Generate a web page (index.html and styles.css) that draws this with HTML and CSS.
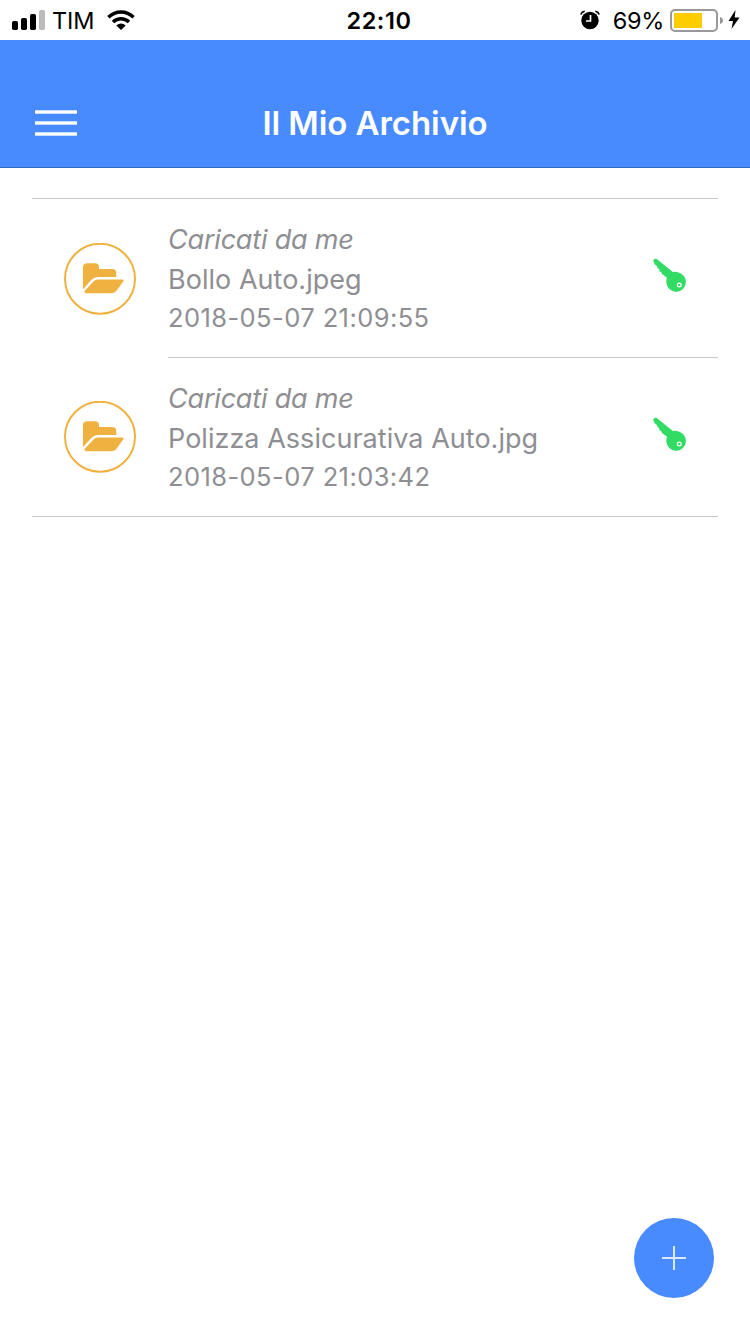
FILE: index.html
```html
<!DOCTYPE html>
<html lang="it">
<head>
<meta charset="utf-8">
<title>Il Mio Archivio</title>
<link rel="stylesheet" href="styles.css">
</head>
<body>
<svg class="defs" width="0" height="0">
  <symbol id="folder" viewBox="0 0 72 72">
    <circle cx="36" cy="35.700" r="35" fill="none" stroke="#efb240" stroke-width="2"/>
    <path fill="#efb240" d="M19 46.3V24.5Q19 20.3 23.2 20.3H31Q35 20.3 35 24.3V26H48Q52.3 26 52.3 30.2V34H35Q30.300 34 27.300 37Z"/>
    <path fill="#efb240" d="M21 47.600L29.500 38.500Q31.300 36.600 34 36.600H58.500Q60.500 36.800 59 38.800L53 47Q51 50.200 47 50.200H22Q19.500 50 21 47.600Z"/>
  </symbol>
  <symbol id="key" viewBox="0 0 36 36">
    <path fill="#32db64" d="M1.200 4Q1.700 1.300 4.800 2L20.800 15Q25 14.200 28.500 16.300A9.700 9.700 0 1 1 14.500 26Q14 23.500 15 20.500L13.200 19.500L11.500 18L10.300 17.500L9.500 15.500L7.500 14.200L7.200 12.300L5.500 11L5 9L2.800 7.500Z"/>
    <circle cx="27.300" cy="28" r="1.900" fill="#32db64" stroke="#fff" stroke-width="1.200"/>
  </symbol>
</svg>
<div class="status">
  <div class="status-left">
    <svg width="34" height="20" viewBox="0 0 34 20"><rect y="11" width="6" height="9" rx="1.700"/><rect x="9" y="8" width="6" height="12" rx="1.700"/><rect x="18" y="4" width="6" height="16" rx="1.700"/><rect x="27" width="6" height="20" rx="1.700" fill="#bbb"/></svg>
    <span class="carrier">TIM</span>
    <svg class="wifi" width="28" height="20" viewBox="0 0 28 20"><g fill="none" stroke="#000" stroke-width="3.500"><path d="M1.400 7.300Q7 2 14 2T26.600 7.300"/><path d="M6 12Q9.500 8.700 14 8.700T22 12"/></g><path d="M9.300 15.400Q14 11.600 18.700 15.400L14 20Z"/></svg>
  </div>
  <span class="clock">22:10</span>
  <div class="status-right">
    <svg width="20" height="20" viewBox="0 0 20 20"><circle cx="10" cy="10.500" r="8.700"/><path d="M.9 4.700Q1.500 1.600 4.700 1.200M19.100 4.700Q18.500 1.600 15.300 1.200" fill="none" stroke="#000" stroke-width="1.500"/><path d="M10.500 5V11H6" fill="none" stroke="#fff" stroke-width="1.700"/></svg>
    <span class="percent">69%</span>
    <svg class="battery" width="54" height="24" viewBox="0 0 54 24"><rect x="1" y="1" width="46" height="21" rx="4" fill="none" stroke="#999" stroke-width="2"/><rect x="4" y="4" width="28" height="15" fill="#fc0"/><path d="M50 8Q53 9 53 11.500T50 15Z" fill="#999"/></svg>
    <svg class="bolt" width="12" height="20" viewBox="0 0 12 20"><path d="M7.500 0L.5 11H5L3.500 19L11.500 7.600H6.700Z"/></svg>
  </div>
</div>
<header class="bar">
  <div class="menu"><i></i><i></i><i></i></div>
  <h1>Il Mio Archivio</h1>
</header>
<main class="list">
  <article class="row">
    <svg class="avatar" width="72" height="72"><use href="#folder"/></svg>
    <div class="body">
      <div class="text"><p class="group">Caricati da me</p><p class="name">Bollo Auto.jpeg</p><p class="date">2018-05-07 21:09:55</p></div>
      <svg class="key" width="36" height="36"><use href="#key"/></svg>
    </div>
  </article>
  <article class="row">
    <svg class="avatar" width="72" height="72"><use href="#folder"/></svg>
    <div class="body">
      <div class="text"><p class="group">Caricati da me</p><p class="name">Polizza Assicurativa Auto.jpg</p><p class="date">2018-05-07 21:03:42</p></div>
      <svg class="key" width="36" height="36"><use href="#key"/></svg>
    </div>
  </article>
</main>
<div class="fab"><svg width="24" height="24" viewBox="0 0 24 24"><path d="M12 0V24M0 12H24" stroke="#dbe8ff" stroke-width="2"/></svg></div>
</body>
</html>
```
FILE: styles.css
```css
* { box-sizing: border-box; }
body { margin: 0; height: 1334px; background: #fff; font-family: Inter, "Liberation Sans", sans-serif; display: flex; flex-direction: column; overflow: hidden; }
h1, p { margin: 0; }
svg { display: block; flex: none; }
.defs { position: absolute; }
.status { height: 40px; flex: none; display: grid; grid-template-columns: 1fr auto 1fr; align-items: center; padding: 0 10px 0 12px; font-size: 23.5px; line-height: 39px; color: #000; }
.status-left, .status-right { display: flex; align-items: center; }
.status-right { justify-content: flex-end; }
.carrier { margin-left: 6px; width: 55px; padding-top: 1px; letter-spacing: -0.1px; }
.clock { font-weight: 600; letter-spacing: 0.6px; padding: 1px 0 0 6px; }
.percent { margin: 0 6px 0 13px; padding-top: 1px; letter-spacing: -0.3px; }
.battery { margin-top: 2px; }
.bolt { margin-left: 4px; }
.bar { height: 128px; flex: none; background: #488aff; border-bottom: 1px solid #3467bf; padding: 39px 35px 0; display: grid; grid-template-columns: 42px 1fr 42px; align-items: center; }
.menu { display: grid; gap: 7px; }
.menu i { height: 4px; background: linear-gradient(#c8dcff 1px, #fff 1px, #fff 3px, #c8dcff 3px); }
h1 { color: #fff; text-align: center; font-size: 33px; font-weight: 580; line-height: 40px; letter-spacing: -0.06px; }
.list { margin: 30px 32px 0; border-top: 1px solid #c8c7cc; border-bottom: 1px solid #c8c7cc; }
.row { display: flex; padding-left: 32px; height: 159px; }
.row:last-child { height: 158px; }
.avatar { margin: 44px 32px 0 0; }
.row:last-child .avatar { margin-top: 43px; }
.body { flex: 1; display: flex; justify-content: space-between; padding: 21px 30px 0 0; border-bottom: 1px solid #c8c7cc; }
.row:last-child .body { border-bottom: 0; }
.text { color: #8e8e93; font-size: 27px; white-space: nowrap; }
.group { font-style: italic; line-height: 39px; letter-spacing: -0.2px; }
.name { line-height: 41px; letter-spacing: 0.03px; }
.date { font-size: 25.5px; line-height: 35px; letter-spacing: 0.42px; }
.key { margin-top: 37px; }
.fab { position: absolute; left: 634px; top: 1218px; width: 80px; height: 80px; border-radius: 50%; background: #488aff; display: grid; place-items: center; }
```
